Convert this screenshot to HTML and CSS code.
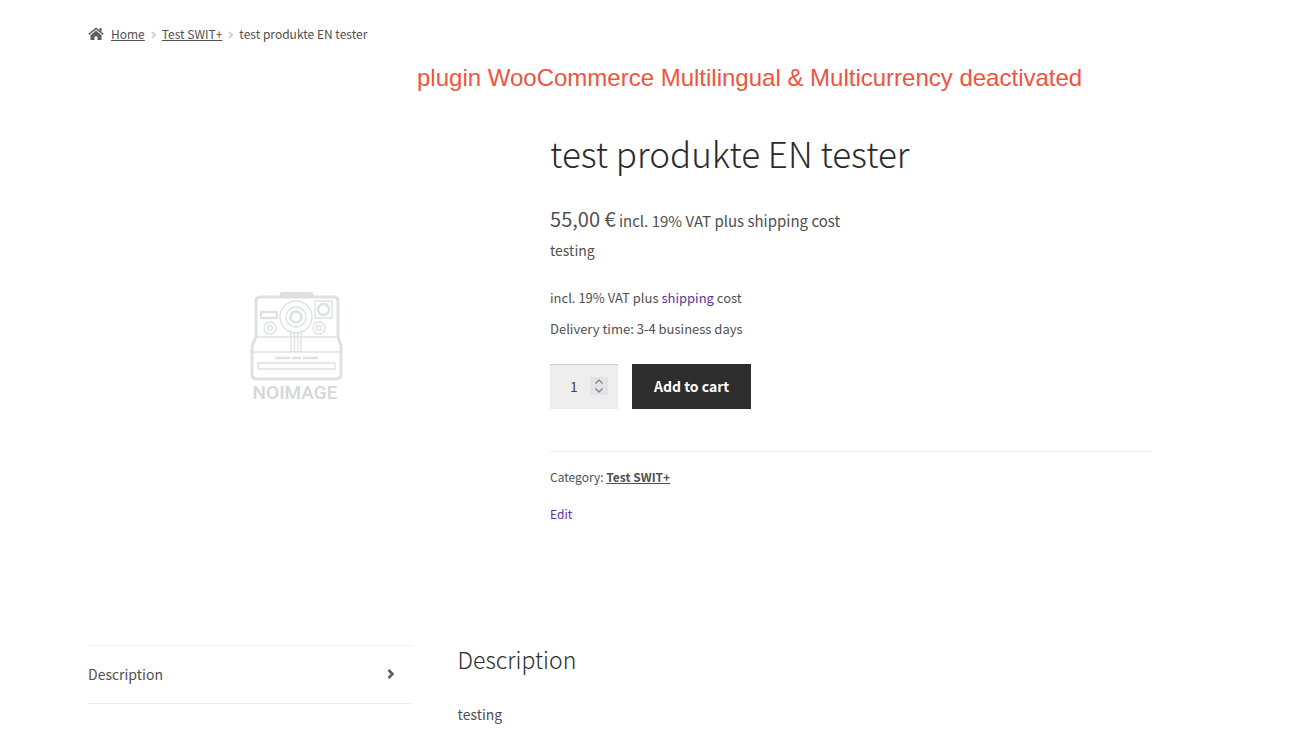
FILE: index.html
```html
<!DOCTYPE html>
<html lang="en">

<head>
  <meta charset="UTF-8">
  <meta name="viewport" content="width=device-width, initial-scale=1.0">
  <title>test produkte EN tester</title>
  <link rel="stylesheet" href="styles.css">
</head>

<body>
  <div class="container">
    <nav class="breadcrumb" aria-label="breadcrumbs">
      <svg class="home-icon" viewBox="0 0 16 14" aria-hidden="true">
        <path d="M8 3.6 2.5 8.2v4.3c0 .4.3.6.6.6h3.4V9.4h3v3.7h3.4c.4 0 .6-.2.6-.6V8.2z" />
        <path d="M.7 7.4 8 1.4l7.3 6" />
        <path class="chimney" d="M11.5 1h2v4l-2-1.6z" />
      </svg>
      <a href="#">Home</a>
      <svg class="separator" viewBox="0 0 5 8" aria-hidden="true"><path d="m1 1 3 3-3 3" /></svg>
      <a href="#">Test SWIT+</a>
      <svg class="separator" viewBox="0 0 5 8" aria-hidden="true"><path d="m1 1 3 3-3 3" /></svg>
      <span>test produkte EN tester</span>
    </nav>

    <p class="note">plugin WooCommerce Multilingual &amp; Multicurrency deactivated</p>

    <main>
      <div class="product">
        <div class="gallery">
          <svg class="placeholder" viewBox="-1 -1 94 116" role="img" aria-label="No image">
            <g class="thick">
              <path d="M31 4.500V3q0-1.500 2-1.500h27q2 0 2 1.500v1.500z" />
              <path d="M6 45V9q0-4 4-4h74q4 0 4 4v36" />
              <path d="M6 45 2 54v28q0 5 5 5h79q5 0 5-5V54l-3-9" />
            </g>
            <g class="thin">
              <path d="M6 45h82M2 60h89M8 71v6h77v-6z" />
              <path d="M41 40v20M44.500 41v19M48 41v19M51 40v20" />
              <circle cx="46" cy="25" r="16" />
              <circle cx="46" cy="25" r="10" />
              <circle cx="20" cy="36" r="6" />
              <circle cx="20" cy="36" r="2.500" />
              <circle cx="69" cy="36" r="6" />
              <circle cx="69" cy="36" r="2.500" />
              <path d="M65 9h17v17H65z" />
            </g>
            <g class="medium">
              <rect x="11" y="20" width="16" height="6" rx="1" />
              <circle cx="46" cy="25" r="5.500" />
              <circle cx="73.500" cy="17.500" r="5.500" />
              <path d="M25 66h15M42 66h9M53 66h15" />
            </g>
            <text x="45" y="107" text-anchor="middle">NOIMAGE</text>
          </svg>
        </div>

        <div class="summary">
          <h1>test produkte EN tester</h1>
          <p class="price"><span class="amount">55,00 €</span> incl. 19% VAT plus shipping cost</p>
          <p class="short-description">testing</p>
          <p class="tax-info">incl. 19% VAT plus <a href="#">shipping</a> cost</p>
          <p class="delivery">Delivery time: 3-4 business days</p>
          <form class="cart">
            <div class="quantity">
              <input type="number" value="1" min="1" aria-label="Product quantity">
              <svg class="spinner" viewBox="0 0 18 18" aria-hidden="true"><path d="m5.500 6.500 3.500-3.500 3.500 3.500M5.500 11.500l3.500 3.500 3.500-3.500" /></svg>
            </div>
            <button type="button">Add to cart</button>
          </form>
          <p class="meta">Category: <a href="#">Test SWIT+</a></p>
          <p class="edit"><a href="#">Edit</a></p>
        </div>
      </div>

      <div class="tabs">
        <ul class="tab-list">
          <li>
            <a href="#description">Description
              <svg class="arrow" viewBox="0 0 8 10" aria-hidden="true"><path d="m1.500 1 4 4-4 4" /></svg>
            </a>
          </li>
        </ul>
        <div class="panel" id="description">
          <h2>Description</h2>
          <p>testing</p>
        </div>
      </div>
    </main>
  </div>
</body>

</html>
```
FILE: styles.css
```css
* {
  margin: 0;
  box-sizing: border-box;
}

body {
  background-color: #fff;
  color: #505050;
  font-family: "Noto Sans CJK SC", "Open Sans", sans-serif;
  font-size: 14px;
  font-weight: 400;
  line-height: 28px;
}

.container {
  max-width: 1239px;
  padding: 22px 88px 8px;
}

a {
  color: #5a359c;
  text-decoration: none;
}

svg {
  fill: none;
}

/* Breadcrumb */
.breadcrumb {
  display: flex;
  align-items: center;
  font-size: 12px;
  line-height: 24px;
}

.breadcrumb a {
  color: #505050;
  text-decoration: underline;
}

.home-icon {
  width: 16px;
  height: 14px;
  margin-right: 7px;
}

.home-icon path {
  fill: #5d5d5d;
}

.home-icon path:nth-child(2) {
  fill: none;
  stroke: #5d5d5d;
  stroke-width: 1.4;
}

.separator {
  width: 5px;
  height: 8px;
  margin: 2px 6px 0;
  stroke: #d4d4d4;
  stroke-width: 2;
}

.note {
  margin: 16px 0 35px 329px;
  color: #ee5541;
  font-family: "Liberation Sans", Arial, sans-serif;
  font-size: 24px;
  line-height: 32px;
  white-space: nowrap;
}

/* Product */
.product {
  display: grid;
  grid-template-columns: 9fr 13fr;
  gap: 46px;
}

.gallery {
  display: flex;
  align-items: center;
  justify-content: center;
  aspect-ratio: 1;
  margin-top: 12px;
}

.placeholder {
  width: 94px;
  height: 116px;
  stroke: #dfe1e1;
}

.thick {
  stroke-width: 3;
}

.medium {
  stroke-width: 2.4;
}

.thin {
  stroke-width: 1.3;
}

.placeholder text {
  fill: #d4d8d8;
  stroke: none;
  font-family: Roboto, sans-serif;
  font-size: 19px;
  font-weight: 500;
}

h1,
h2 {
  color: #2b2b2b;
  font-weight: 300;
}

h1 {
  font-size: 35px;
  line-height: 48px;
}

.price {
  margin-top: 27px;
  font-size: 15px;
  line-height: 30px;
}

.amount {
  font-size: 20px;
}

.tax-info,
.delivery,
.meta,
.edit {
  line-height: 24px;
}

.tax-info,
.delivery {
  font-size: 13px;
}

.meta,
.edit {
  font-size: 12px;
}

.tax-info {
  margin-top: 22px;
}

.delivery {
  margin-top: 7px;
}

.cart {
  display: flex;
  gap: 14px;
  margin-top: 23px;
}

.quantity {
  position: relative;
}

.quantity input {
  width: 68px;
  height: 45px;
  padding: 0 20px 2px;
  border: 0;
  border-radius: 0;
  background-color: #eee;
  box-shadow: inset 0 1px 1px rgba(0, 0, 0, 0.15);
  color: #43454b;
  font: inherit;
  appearance: textfield;
}

.quantity input::-webkit-inner-spin-button {
  display: none;
}

.spinner {
  position: absolute;
  top: 13px;
  right: 10px;
  width: 18px;
  height: 18px;
  background-color: #e2e2e7;
  stroke: #85858f;
  stroke-width: 1.4;
  pointer-events: none;
}

.cart button {
  height: 45px;
  padding: 0 22px 2px;
  border: 0;
  background-color: #2d2d2d;
  color: #fff;
  font: inherit;
  font-weight: 700;
  cursor: pointer;
}

.meta {
  margin-top: 42px;
  padding-top: 13px;
  border-top: 1px solid #eee;
}

.meta a {
  color: #505050;
  font-weight: 700;
  text-decoration: underline;
}

.edit {
  margin-top: 13px;
}

/* Tabs */
.tabs {
  display: grid;
  grid-template-columns: 7fr 15fr;
  gap: 46px;
  margin-top: 88px;
}

.tab-list {
  align-self: start;
  padding: 0;
  border-top: 1px solid #eee;
  list-style: none;
}

.tab-list a {
  display: flex;
  align-items: center;
  justify-content: space-between;
  padding: 14px 17px 15px 0;
  border-bottom: 1px solid #eee;
  color: #505050;
}

.arrow {
  width: 8px;
  height: 10px;
  stroke: #5d5d5d;
  stroke-width: 2.6;
}

h2 {
  font-size: 23px;
  line-height: 28px;
}

.panel p {
  margin-top: 27px;
}
```
